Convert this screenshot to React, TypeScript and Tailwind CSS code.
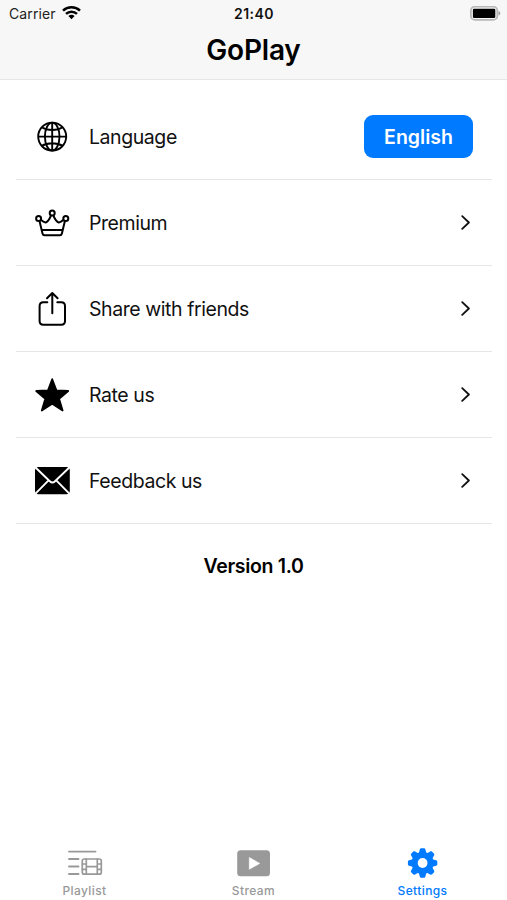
import type { ReactNode } from 'react';

const GlobeIcon = () => (
  <svg className="w-9 h-9" viewBox="0 0 36 36" fill="none" stroke="currentColor" strokeWidth="1.9">
    <circle cx="18.2" cy="17.6" r="14" />
    <ellipse cx="18.2" cy="17.6" rx="7.3" ry="14" />
    <path d="M18.2 3.600v28M4.200 17.600h28M7.700 8.300c5.800 3.600 15.200 3.600 21 0M7.700 26.900c5.800-3.600 15.200-3.600 21 0" />
  </svg>
);

const CrownIcon = () => (
  <svg className="w-9 h-9" viewBox="0 0 36 36" fill="none" stroke="currentColor" strokeWidth="2" strokeLinejoin="round">
    <circle cx="4.6" cy="13.6" r="2.5" />
    <circle cx="18.2" cy="8" r="2.5" />
    <circle cx="31.8" cy="13.6" r="2.5" />
    <path d="M5.500 16l3 12.400c.3 1.200 1 1.800 2 1.800h15.400c1 0 1.700-.6 2-1.800l3-12.400M6.800 14.800c1.800 1.500 3.300 2.400 4.900 2.800 2.300-1 4-3.800 5.400-7.200M29.600 14.800c-1.800 1.500-3.300 2.400-4.900 2.800-2.300-1-4-3.800-5.400-7.200M7.900 25h20.600" />
  </svg>
);

const ShareIcon = () => (
  <svg className="w-9 h-9" viewBox="0 0 36 36" fill="none" stroke="currentColor" strokeWidth="2" strokeLinecap="round" strokeLinejoin="round">
    <path d="M13.300 11.300H9.300c-2.200 0-3.700 1.500-3.700 3.700v15c0 2.200 1.500 3.700 3.700 3.700h18c2.200 0 3.700-1.500 3.700-3.700V15c0-2.200-1.500-3.700-3.700-3.700h-4" />
    <path d="M18.300 22.200V2M13 7.200L18.300 2l5.300 5.200" />
  </svg>
);

const StarIcon = () => (
  <svg className="w-9 h-9" viewBox="0 0 36 36" fill="currentColor" stroke="currentColor" strokeWidth="1.8" strokeLinejoin="round">
    <path d="M18.200 2.200l4.300 11.300 11.700.5-9.100 7.700 3.500 11.800-10.400-6.700-10.400 6.700 3.500-11.800L2.200 14l11.700-.5z" />
  </svg>
);

const MailIcon = () => (
  <svg className="w-9 h-9" viewBox="0 0 36 36">
    <rect x="1" y="4" width="34.800" height="27.200" rx="3.500" fill="currentColor" />
    <path d="M1.500 4.500l14.300 13.700c1.600 1.500 3.600 1.500 5.200 0L35.300 4.500M1.500 30.700l12.800-13M35.300 30.700L22.500 17.700" fill="none" stroke="white" strokeWidth="1.900" />
  </svg>
);

const ChevronIcon = () => (
  <svg className="w-3 h-4" viewBox="0 0 12 16" fill="none" stroke="#111" strokeWidth="1.800" strokeLinecap="round" strokeLinejoin="round">
    <path d="M1.200 1.100L7.900 7.500l-6.700 6.400" />
  </svg>
);

const WifiIcon = () => (
  <svg className="w-[19px] h-[14px]" viewBox="0 0 19 14" fill="none" stroke="currentColor" strokeWidth="2.500">
    <path d="M1 4.700c4.700-4.500 12.300-4.500 17 0M4 7.800c3.100-2.900 7.900-2.900 11 0" />
    <path d="M9.500 13.200L6.400 10c1.800-1.600 4.400-1.600 6.200 0z" fill="currentColor" stroke="none" />
  </svg>
);

const BatteryIcon = () => (
  <svg className="w-[32px] h-[15px]" viewBox="0 0 32 15">
    <rect x="0.900" y="0.700" width="26.400" height="13.200" rx="4" fill="none" stroke="#b8b8b8" strokeWidth="1.800" />
    <rect x="2.900" y="2.700" width="22.400" height="9.200" rx="1.200" fill="black" />
    <path d="M28.500 5.100c2.400.8 2.400 3.600 0 4.400z" fill="#9d9d9d" />
  </svg>
);

const PlaylistIcon = () => (
  <svg className="w-9 h-8" viewBox="0 0 36 32" fill="none" stroke="currentColor" strokeWidth="1.900" strokeLinecap="round">
    <path d="M2 4.600h26.500M2 12h9.500M2 19.500h9.500M2 27h9.500" />
    <g strokeWidth="1.700">
      <rect x="15.300" y="12" width="19" height="15.200" rx="2" />
      <path d="M19.300 12v15M30.300 12v15M19.300 19.600h11M15.300 17h4M15.300 22.300h4M30.300 17h4M30.300 22.300h4" />
    </g>
  </svg>
);

const StreamIcon = () => (
  <svg className="w-9 h-8" viewBox="0 0 36 32">
    <rect x="1.200" y="3.200" width="32.800" height="26" rx="3.500" fill="currentColor" />
    <path d="M13.300 10.500v11.800l10.400-5.900z" fill="white" stroke="white" strokeWidth="0.600" strokeLinejoin="round" />
  </svg>
);

const GearIcon = () => (
  <svg className="w-9 h-8" viewBox="0 0 36 32">
    <g fill="currentColor">
      <circle cx="17.600" cy="16" r="11" />
      {[0, 45, 90, 135, 180, 225, 270, 315].map((angle) => (
        <path
          key={angle}
          d="M13.600 7l1.200-4.400c.3-.9.800-1.300 1.600-1.300h2.400c.8 0 1.300.4 1.600 1.300L21.600 7z"
          transform={`rotate(${angle} 17.600 16)`}
        />
      ))}
    </g>
    <circle cx="17.600" cy="16" r="4.900" fill="white" />
  </svg>
);

type Item = { label: string; icon: ReactNode; value?: string };

const items: Item[] = [
  { label: 'Language', icon: <GlobeIcon />, value: 'English' },
  { label: 'Premium', icon: <CrownIcon /> },
  { label: 'Share with friends', icon: <ShareIcon /> },
  { label: 'Rate us', icon: <StarIcon /> },
  { label: 'Feedback us', icon: <MailIcon /> },
];

const tabs = [
  { label: 'Playlist', icon: <PlaylistIcon />, active: false },
  { label: 'Stream', icon: <StreamIcon />, active: false },
  { label: 'Settings', icon: <GearIcon />, active: true },
];

const App = () => {
  return (
    <div className="flex h-[900px] w-full flex-col bg-white font-['Inter','Liberation_Sans',sans-serif] text-black">
      <header className="h-[80px] border-b border-[#e6e6e6] bg-[#f7f7f7]">
        {/* status bar */}
        <div className="grid h-[26px] grid-cols-3 items-center pl-[9px] pr-[5px]">
          <div className="flex items-center gap-1.5">
            <span className="text-[14px] tracking-[0.1px] text-[#222]">Carrier</span>
            <WifiIcon />
          </div>
          <span className="pr-[3px] text-center text-[14px] font-semibold tracking-[0.5px] text-[#111]">21:40</span>
          <div className="flex justify-end">
            <BatteryIcon />
          </div>
        </div>
        <h1 className="text-center text-[28px] font-semibold leading-[48px] tracking-[-0.2px]">GoPlay</h1>
      </header>

      <main className="flex-1 px-4 pt-3.5">
        <ul className="mr-[-1px]">
          {items.map((item) => (
            <li key={item.label} className="flex h-[86px] items-center border-b border-[#e6e6e6] pl-[18px] pr-[19px]">
              {item.icon}
              <span className="ml-[19px] flex-1 pt-0.5 text-[19.500px] tracking-[-0.430px] text-[#111]">{item.label}</span>
              {item.value ? (
                <button className="h-[43px] w-[109px] rounded-[9px] bg-[#007aff] pt-0.5 text-[19.500px] font-semibold text-white">
                  {item.value}
                </button>
              ) : (
                <ChevronIcon />
              )}
            </li>
          ))}
        </ul>
        <p className="pt-7 text-center text-[19.500px] font-semibold leading-[29px] tracking-[-0.330px]">Version 1.0</p>
      </main>

      <nav className="grid h-[53px] grid-cols-3">
        {tabs.map((tab) => (
          <div
            key={tab.label}
            className={`flex flex-col items-center ${tab.active ? 'text-[#007aff]' : 'text-[#999999]'}`}
          >
            {tab.icon}
            <span className="mt-1 text-xs font-medium leading-[16px] tracking-[0.4px]">{tab.label}</span>
          </div>
        ))}
      </nav>
    </div>
  );
};

export default App;
